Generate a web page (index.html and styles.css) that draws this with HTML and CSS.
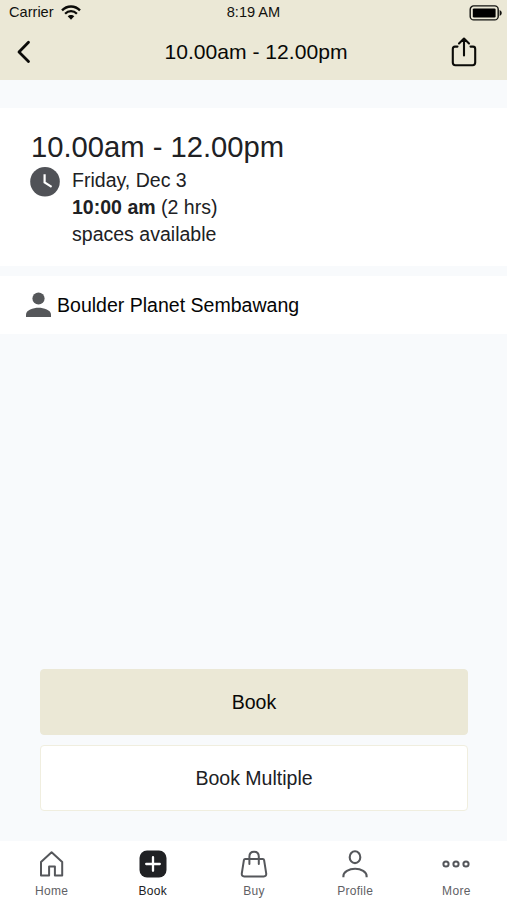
FILE: index.html
```html
<!DOCTYPE html>
<html lang="en">
<head>
<meta charset="utf-8">
<title>10.00am - 12.00pm</title>
<link rel="stylesheet" href="styles.css">
</head>
<body>
<div class="app">
  <header class="header">
    <div class="status">
      <div class="carrier"><span>Carrier</span>
        <svg width="20" height="15" viewBox="0 0 20 15" fill="none" stroke="#0b0b08" stroke-width="2.3"><path d="M1 5.4C6 .2 14 .2 19 5.4M4.1 8.7c3.4-3.4 8.4-3.4 11.8 0"/><path d="M6.7 11.3c1.9-1.9 4.7-1.9 6.6 0L10 14.7z" fill="#0b0b08" stroke="none"/></svg>
      </div>
      <span class="time">8:19 AM</span>
      <svg class="battery" width="34" height="16" viewBox="0 0 34 16"><rect x="2.2" y=".9" width="28" height="14" rx="3.5" fill="none" stroke="#11110e" stroke-width="1.4"/><rect x="4.8" y="3.4" width="22.8" height="9" rx="1.2" fill="#000"/><path d="M31.6 5q2.2 1 2.2 3t-2.2 3z" fill="#11110e"/></svg>
    </div>
    <div class="navbar">
      <svg width="16" height="24" viewBox="0 0 16 24" fill="none" stroke="#0b0b08" stroke-width="2.8" stroke-linecap="round" stroke-linejoin="round"><path d="M13.5 2.2 4 12l9.5 9.6"/></svg>
      <h1 class="heading">10.00am - 12.00pm</h1>
      <svg class="share" width="26" height="30" viewBox="0 0 26 30" fill="none" stroke="#0b0b08" stroke-width="2.1" stroke-linecap="round" stroke-linejoin="round"><path d="M6.5 9.6H4Q1.8 9.6 1.8 12v13.6q0 2.6 2.6 2.6h17.2q2.6 0 2.6-2.6V12q0-2.4-2.2-2.4h-2.5M13 18.5V1.6M8 6.4l5-4.9 5 4.9"/></svg>
    </div>
  </header>
  <main class="content">
    <section class="session">
      <h2 class="title">10.00am - 12.00pm</h2>
      <div class="details">
        <svg width="30" height="30" viewBox="0 0 30 30"><circle cx="15" cy="14.8" r="14.8" fill="#505257"/><path d="M14.6 7.2v8.3l7 4.4" fill="none" stroke="#fff" stroke-width="2.2"/></svg>
        <div class="lines">
          <div>Friday, Dec 3</div>
          <div><b>10:00 am</b> (2 hrs)</div>
          <div>spaces available</div>
        </div>
      </div>
    </section>
    <section class="venue">
      <svg width="25" height="26" viewBox="0 0 25 26" fill="#55575a"><circle cx="12.5" cy="6.5" r="6.1"/><path d="M0 25v-2.6C0 18 7.2 15.7 12.5 15.7S25 18 25 22.4V25z"/></svg>
      <span>Boulder Planet Sembawang</span>
    </section>
    <div class="actions">
      <button class="button primary">Book</button>
      <button class="button secondary">Book Multiple</button>
    </div>
  </main>
  <nav class="tabs">
    <a class="tab"><svg width="28" height="28" viewBox="0 0 28 28" fill="none" stroke="#55575b" stroke-width="2" stroke-linejoin="round"><path d="M3 12 13.6 2.2 24.2 12v13.4h-7.3v-8.8h-5.8v8.8H3z"/></svg>Home</a>
    <a class="tab active"><svg width="28" height="28" viewBox="0 0 28 28"><rect x=".5" y=".5" width="27" height="27" rx="7.5" fill="#202124"/><path d="M14 7.2v13.6M7.2 14h13.6" stroke="#fff" stroke-width="2.3" stroke-linecap="round"/></svg>Book</a>
    <a class="tab"><svg width="28" height="28" viewBox="0 0 28 28" fill="none" stroke="#55575b" stroke-width="2" stroke-linecap="round" stroke-linejoin="round"><path d="M5.2 9h17.6q1.1 0 1.3 1.2l2.1 13.2q.3 3.1-2.4 3.1H4.2q-2.7 0-2.4-3.1l2.1-13.2Q4.1 9 5.2 9zM9.4 14V6.5q0-4.8 4.7-4.8t4.7 4.8V14"/></svg>Buy</a>
    <a class="tab"><svg width="28" height="28" viewBox="0 0 28 28" fill="none" stroke="#55575b" stroke-width="2.1"><ellipse cx="14" cy="7.2" rx="5.3" ry="5.9"/><path d="M2.4 27.3v-1.2c0-4 5.5-7.4 11.7-7.4s11.5 3.4 11.5 7.4v1.2"/></svg>Profile</a>
    <a class="tab"><svg width="28" height="28" viewBox="0 0 28 28" fill="none" stroke="#55575b" stroke-width="2"><circle cx="4" cy="14" r="2.6"/><circle cx="14" cy="14" r="2.6"/><circle cx="24" cy="14" r="2.6"/></svg>More</a>
  </nav>
</div>
</body>
</html>
```
FILE: styles.css
```css
* { box-sizing: border-box; }
body {
  margin: 0;
  font-family: "Liberation Sans", Arial, sans-serif;
  color: #202124;
  font-size: 19.55px;
}
svg { display: block; flex: none; }
.app { display: flex; flex-direction: column; height: 900px; background: #f8fafc; overflow: hidden; }
.header { height: 80px; background: #ebe8d6; color: #11110e; }
.status { display: grid; grid-template-columns: 1fr auto 1fr; align-items: center; height: 24px; padding: 0 5px 0 9px; font-size: 14.6px; line-height: 24px; }
.carrier { display: flex; align-items: center; gap: 7px; }
.time { margin-left: -4px; }
.battery { justify-self: end; margin-top: 1px; }
.navbar { display: grid; grid-template-columns: 1fr auto 1fr; align-items: center; height: 56px; padding: 0 12px 0 15px; }
.heading { margin: 0 0 0 2px; font-size: 21.1px; font-weight: 400; line-height: 56px; color: #080806; }
.share { justify-self: end; margin-right: 18px; }
.content { flex: 1; display: flex; flex-direction: column; padding-top: 28px; }
.session { height: 158px; padding: 21px 30px 0; background: #fff; }
.title { margin: 0 0 2px 1px; font-size: 29.2px; font-weight: 400; line-height: 36px; }
.details { display: flex; gap: 12px; }
.lines { line-height: 27px; }
.venue { display: flex; align-items: center; gap: 6px; height: 58px; margin-top: 10px; padding: 0 26px; background: #fff; color: #050505; }
.actions { display: flex; flex-direction: column; gap: 10px; margin-top: auto; padding: 0 39px 30px 40px; }
.button { height: 66px; padding: 0; border: 1px solid #ebe8d6; border-radius: 4px; font: inherit; color: #202124; }
.primary { background: #ebe8d6; color: #080806; }
.secondary { background: #fff; border-color: #f0eedf; }
.tabs { display: grid; grid-template-columns: repeat(5, 1fr); height: 59px; padding-left: 1px; background: #fff; }
.tab { display: flex; flex-direction: column; align-items: center; gap: 6px; padding-top: 9px; font-size: 12px; line-height: 14px; letter-spacing: .3px; color: #5f6165; }
.active { color: #202124; }
```
